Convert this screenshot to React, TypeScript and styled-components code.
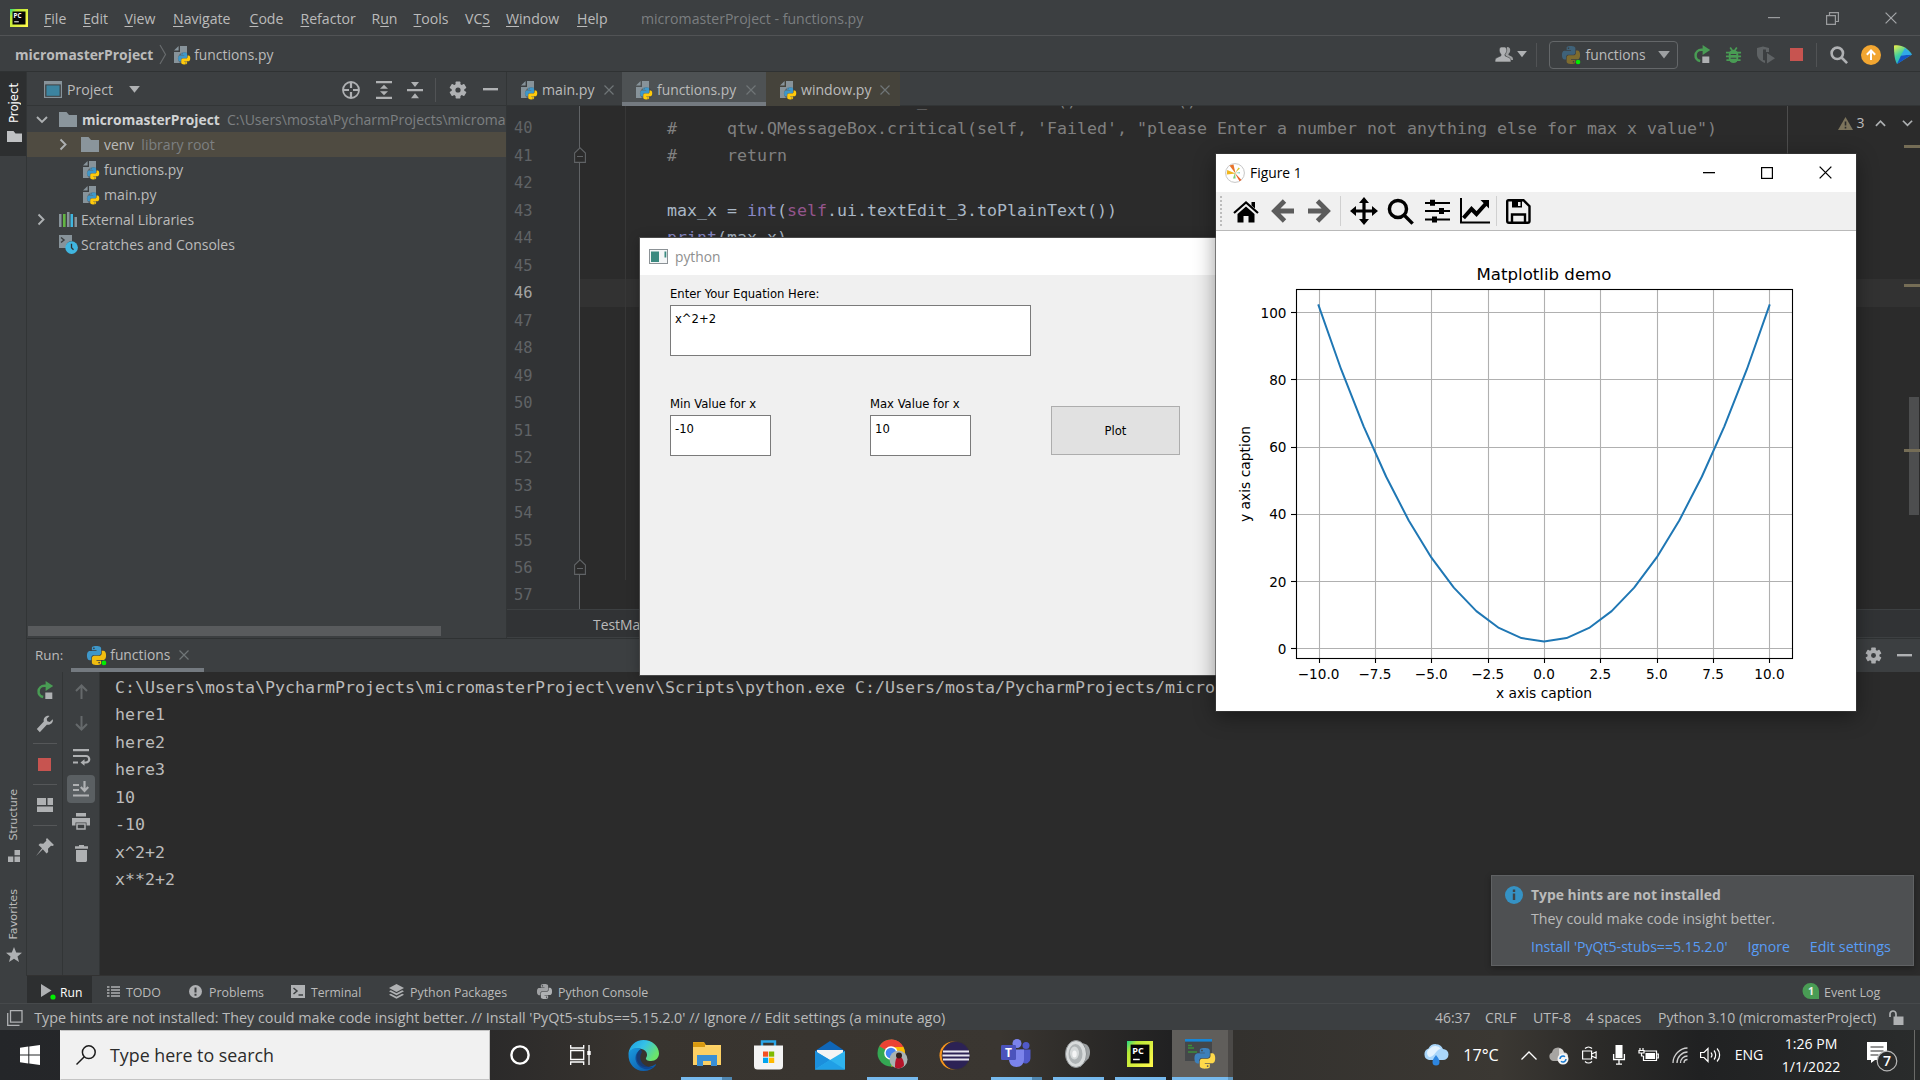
import React from 'react';
import styled, { createGlobalStyle, css } from 'styled-components';

const ui = `"Open Sans", "Noto Sans", sans-serif`;
const mono = `"DejaVu Sans Mono", "Liberation Mono", monospace`;

const Global = createGlobalStyle`
  * { box-sizing: border-box; }
  body { margin: 0; background: #2b2b2b; }
  svg { display: block; flex: none; overflow: visible; }
`;

const Screen = styled.div`
  position: relative;
  display: flex;
  flex-direction: column;
  width: 1920px;
  height: 1080px;
  overflow: hidden;
  background: #3c3f41;
  color: #bbbbbb;
  font: 14.1px/20px ${ui};
  white-space: pre;
`;

/* ---------- shared pieces ---------- */
const Label = styled.span<{ $size?: number; $ls?: number; $color?: string; $bold?: boolean }>`
  flex: none;
  ${p => p.$size && css`font-size: ${p.$size}px;`}
  ${p => p.$ls && css`letter-spacing: ${p.$ls}px;`}
  ${p => p.$color && css`color: ${p.$color};`}
  ${p => p.$bold && css`font-weight: 700;`}
`;
const Spacer = styled.div`flex: 1;`;
const VLine = styled.div<{ $h: number; $color?: string }>`
  flex: none;
  width: 1px;
  height: ${p => p.$h}px;
  background: ${p => p.$color || '#515355'};
`;

/* ---------- icons ---------- */
const PY_HALF = 'M14.25.18l.9.2.73.26.59.3.45.32.34.34.25.34.16.33.1.3.04.26.02.2-.01.13V8.5l-.05.63-.13.55-.21.46-.26.38-.3.31-.33.25-.35.19-.35.14-.33.1-.3.07-.26.04-.21.02H8.77l-.69.05-.59.14-.5.22-.41.27-.33.32-.27.35-.2.36-.15.37-.1.35-.07.32-.04.27-.02.21v3.06H3.17l-.21-.03-.28-.07-.32-.12-.35-.18-.36-.26-.36-.36-.35-.46-.32-.59-.28-.73-.21-.88-.14-1.05-.05-1.23.06-1.22.16-1.04.24-.87.32-.71.36-.57.4-.44.42-.33.42-.24.4-.16.36-.1.32-.05.24-.01h.16l.06.01h8.16v-.83H6.18l-.01-2.75-.02-.37.05-.34.11-.31.17-.28.25-.26.31-.23.38-.2.44-.18.51-.15.58-.12.64-.1.71-.06.77-.04.84-.02 1.27.05zm-6.3 1.98l-.23.33-.08.41.08.41.23.34.33.22.41.09.41-.09.33-.22.23-.34.08-.41-.08-.41-.23-.33-.33-.22-.41-.09-.41.09z';
const PyShape = ({ a = '#3e97c9', b = '#f0bd10' }) => (
  <g fillRule="evenodd">
    <path d={PY_HALF} fill={a} />
    <path d={PY_HALF} fill={b} transform="rotate(180 12 12)" />
  </g>
);
const PyIcon = ({ size = 19, a, b, dot }: { size?: number; a?: string; b?: string; dot?: boolean }) => (
  <svg width={size} height={size} viewBox="0 0 24 24">
    <PyShape a={a} b={b} />
    {dot && <circle cx="21.4" cy="21.4" r="3" fill="#00f000" />}
  </svg>
);
const PyFile = () => (
  <svg width="18" height="20" viewBox="0 0 18 20">
    <path d="M7 1h7v17H1V7h6z" fill="#87939a" />
    <path d="M5.6 1v4.6H1z" fill="#87939a" />
    <g transform="translate(5.2 7.4) scale(.5)">
      <circle cx="12" cy="12" r="12.5" fill="#3c3f41" opacity=".55" />
      <PyShape a="#3e97c9" b="#ffca0a" />
    </g>
  </svg>
);
const Folder = ({ w = 18 }: { w?: number }) => (
  <svg width={w} height={w * 0.84} viewBox="0 0 18 15">
    <path d="M0 0h7.5l2.500 3H18v12H0z" fill="#8a959c" />
  </svg>
);
const Chevron = ({ dir, color = '#adb0b2', size = 12 }: { dir: 'down' | 'right' | 'up'; color?: string; size?: number }) => (
  <svg width={size} height={size} viewBox="0 0 12 12" fill="none" stroke={color} strokeWidth="1.9">
    <path d={dir === 'down' ? 'M1 3l5 5 5-5' : dir === 'up' ? 'M1 8.5l5-5 5 5' : 'M2.500 .5l5 5-5 5'} />
  </svg>
);
const Triangle = ({ w = 11, color = '#afb1b3' }: { w?: number; color?: string }) => (
  <svg width={w} height={w * 0.62} viewBox="0 0 11 7"><path d="M0 0h11L5.5 7z" fill={color} /></svg>
);
const Cross = ({ size = 10, color = '#6f7577', sw = 1.2 }: { size?: number; color?: string; sw?: number }) => (
  <svg width={size} height={size} viewBox="0 0 10 10" stroke={color} strokeWidth={sw}><path d="M.5.5l9 9M9.5.5l-9 9" /></svg>
);
const Gear = ({ size = 18 }: { size?: number }) => (
  <svg width={size} height={size} viewBox="0 0 18 18">
    <g fill="#afb1b3">
      {[0, 60, 120].map(r => <rect key={r} x="6.6" y="0.6" width="4.8" height="16.8" rx="0.6" transform={`rotate(${r} 9 9)`} />)}
      <circle cx="9" cy="9" r="6.3" />
    </g>
    <circle cx="9" cy="9" r="2.6" fill="#3c3f41" />
  </svg>
);
const Rerun = () => (
  <svg width="18" height="19" viewBox="0 0 18 19">
    <path d="M10 4.800H8.200a5.700 5.700 0 0 0-1 11.300" fill="none" stroke="#499c54" strokeWidth="2.500" />
    <path d="M9.600 0l7.600 5-7.600 5z" fill="#499c54" />
    <rect x="9.300" y="11.500" width="7" height="6.500" fill="#afb1b3" />
  </svg>
);
const StopSquare = () => <svg width="13" height="13"><rect width="13" height="13" fill="#c75450" /></svg>;
const PyCharmLogo = ({ size }: { size: number }) => (
  <svg width={size} height={size} viewBox="0 0 18 18">
    <defs><linearGradient id="pcg" x1="0" y1="0" x2="1" y2="0.8"><stop offset="0" stopColor="#21d789" /><stop offset=".25" stopColor="#b8e835" /><stop offset="1" stopColor="#fcf84a" /></linearGradient></defs>
    <rect width="18" height="18" fill="url(#pcg)" />
    <rect x="2.500" y="2.500" width="13" height="13" fill="#060606" />
    <text x="3.600" y="9" fontFamily="Open Sans" fontWeight="700" fontSize="6.300" fill="#fff">PC</text>
    <rect x="4.200" y="12.300" width="4.600" height="1" fill="#fff" />
  </svg>
);
const Magnifier = ({ size, color, sw }: { size: number; color: string; sw: number }) => (
  <svg width={size} height={size} viewBox="0 0 18 18" fill="none" stroke={color} strokeWidth={sw}>
    <circle cx="7.300" cy="7.300" r="5.700" /><path d="M11.500 11.500l5.600 5.600" />
  </svg>
);

/* ---------- title and navigation bars ---------- */
const TitleBar = styled.div`
  flex: none;
  display: flex;
  align-items: center;
  height: 36px;
  padding: 1px 23px 0 10px;
  border-bottom: 1px solid #515355;
`;
const Menu = styled.div`display: flex; padding: 1px 0 0 16px;`;
const MenuItem = styled.div<{ $w: number }>`
  width: ${p => p.$w}px;
  u { text-underline-offset: 2px; text-decoration-thickness: 1px; }
`;
const WindowName = styled.div`padding-top: 1px; margin-left: -1px; color: #7b7e80;`;
const WinControls = styled.div`display: flex; align-items: center; gap: 46px;`;
const menu: [string, string, string, number][] = [
  ['', 'F', 'ile', 39], ['', 'E', 'dit', 41.5], ['', 'V', 'iew', 48.5], ['', 'N', 'avigate', 76.5], ['', 'C', 'ode', 51],
  ['', 'R', 'efactor', 71], ['R', 'u', 'n', 42], ['', 'T', 'ools', 51.5], ['VC', 'S', '', 41], ['', 'W', 'indow', 71], ['', 'H', 'elp', 65],
];

const NavBar = styled.div`
  flex: none;
  display: flex;
  align-items: center;
  height: 36px;
  padding: 2px 8px 0 15px;
  border-bottom: 1px solid #2f3233;
`;
const Crumb = styled.div`display: flex; align-items: center; gap: 3px; padding-left: 6px;`;
const RunConfig = styled.div`
  display: flex;
  align-items: center;
  width: 129px;
  height: 28px;
  margin: 0 15px 0 12px;
  padding: 0 12px 0 12px;
  gap: 6px;
  border: 1px solid #646769;
  border-radius: 4px;
`;
const Actions = styled.div<{ $gap: number; $ml?: number }>`
  display: flex;
  align-items: center;
  gap: ${p => p.$gap}px;
  margin-left: ${p => p.$ml || 0}px;
`;

const PersonIcon = () => (
  <svg width="18" height="17" viewBox="0 0 18 17" fill="#afb1b3">
    <path d="M12 1c2.500 0 3.300 1.500 3.200 3.200-.1 1.800-.8 2.800-1.700 3.600v1.200l3 1.500c.9.500 1.500 1.200 1.500 3.500h-3l-5-5z" opacity=".85" />
    <path d="M6.500 1h3c1.500 0 2.300 1.500 2.200 3.300-.1 2-1 3.300-1.700 4v1.500l4.300 2c1.200.6 1.700 1.500 1.700 4.200H0c0-2.700.5-3.600 1.700-4.200l4.300-2V8.300c-.7-.7-1.600-2-1.700-4C4.200 2.500 5 1 6.500 1z" stroke="#3c3f41" strokeWidth=".6" />
  </svg>
);
const BugIcon = () => (
  <svg width="17" height="18" viewBox="0 0 18 18">
    <g stroke="#499c54" strokeWidth="1.800" fill="none"><path d="M1 6.500h16M1 10.500h16M1.500 14.500h15M5.500 1l2 3M12.500 1l-2 3" /></g>
    <rect x="4" y="3.500" width="10" height="14" rx="5" fill="#499c54" />
    <path d="M6 8.500h6M6 12.500h6" stroke="#3c3f41" strokeWidth="1.200" />
  </svg>
);
const CoverageIcon = () => (
  <svg width="19" height="18" viewBox="0 0 19 18" fill="#5f6365">
    <path d="M0 2l6-1.500L12 2v4H9V3.500H6V14l2 .5v2.500C3 15 0 12 0 8z" /><path d="M10 7l8 5.300-8 5.200z" />
  </svg>
);
const UpdateIcon = () => (
  <svg width="20" height="20" viewBox="0 0 20 20"><circle cx="10" cy="10" r="10" fill="#f2a631" /><path d="M10 15V6M5.800 9.800L10 5.500l4.200 4.300" stroke="#fff" strokeWidth="2" fill="none" /></svg>
);
const SpaceIcon = () => (
  <svg width="18" height="19" viewBox="0 0 18 19">
    <defs><linearGradient id="spg" x1="0" y1="0" x2=".6" y2="1"><stop offset="0" stopColor="#f4f046" /><stop offset=".5" stopColor="#3fd0a0" /><stop offset="1" stopColor="#1aa0e0" /></linearGradient></defs>
    <path d="M0 .5C7-1 14 3 18 9.500L3 19C0 14 0 5 0 .5z" fill="url(#spg)" />
    <path d="M18 9.500L3 19 7 10.500z" fill="#1553c4" /><path d="M18 9.500L7 10.500 11 3z" fill="#32a8e8" />
  </svg>
);

/* ---------- main area ---------- */
const Main = styled.div`flex: none; display: flex; height: 904px;`;
const Stripe = styled.div`
  flex: none;
  display: flex;
  flex-direction: column;
  width: 27px;
  border-right: 1px solid #323536;
`;
const StripeButton = styled.div<{ $on?: boolean; $h: number; $gap: number }>`
  display: flex;
  flex-direction: column;
  align-items: center;
  justify-content: flex-end;
  gap: ${p => p.$gap}px;
  height: ${p => p.$h}px;
  padding-left: 2px;
  background: ${p => (p.$on ? '#2d2f30' : 'transparent')};
  color: ${p => (p.$on ? '#ffffff' : '#bbbbbb')};
`;
const Vertical = styled.span<{ $size: number }>`
  writing-mode: vertical-rl;
  transform: rotate(180deg);
  font: ${p => p.$size}px/18px "DejaVu Sans", "Open Sans", sans-serif;
`;
const Work = styled.div`flex: 1; min-width: 0; display: flex; flex-direction: column;`;
const Upper = styled.div`flex: none; display: flex; height: 566px;`;

const ProjectPanel = styled.div`
  flex: none;
  display: flex;
  flex-direction: column;
  width: 480px;
  border-right: 1px solid #323536;
`;
const PanelHeader = styled.div`
  flex: none;
  display: flex;
  align-items: center;
  height: 34px;
  padding: 2px 8px 0 17px;
  border-bottom: 1px solid #323536;
`;
const PanelTitle = styled.div`display: flex; align-items: center; gap: 16px; padding-left: 5px;`;
const Tree = styled.div`flex: 1; padding-top: 1px; overflow: hidden;`;
const TreeRow = styled.div<{ $pad: number; $hl?: boolean }>`
  display: flex;
  align-items: center;
  height: 25px;
  padding-left: ${p => p.$pad}px;
  overflow: hidden;
  background: ${p => (p.$hl ? '#4f4b41' : 'transparent')};
`;
const TreeArrow = styled.span`flex: none; width: 23px;`;
const TreeIcon = styled.span<{ $w?: number }>`flex: none; width: ${p => p.$w || 23}px;`;
const Thumb = styled.div`width: 413px; height: 10px; margin: 0 0 2px 1px; background: #595b5d;`;

const LocateIcon = () => (
  <svg width="18" height="18" viewBox="0 0 18 18" fill="none" stroke="#afb1b3" strokeWidth="1.800"><circle cx="9" cy="9" r="8" /><path d="M9 1v6M9 11v6M1 9h6M11 9h6" strokeWidth="2.200" /></svg>
);
const ExpandIcon = () => (
  <svg width="16" height="18" viewBox="0 0 16 18" fill="#afb1b3"><path d="M0 0h16v2.200H0zM0 15.800h16V18H0zM8 3.800l4 4H4zM8 14.200l4-4H4z" /></svg>
);
const CollapseIcon = () => (
  <svg width="16" height="18" viewBox="0 0 16 18" fill="#afb1b3"><path d="M0 8h16v2.200H0zM8 6L4 1h8zM8 12.200l-4 5h8z" /></svg>
);
const Dash = ({ w = 15, color = '#afb1b3', h = 2.4 }) => <svg width={w} height={h}><rect width={w} height={h} fill={color} /></svg>;
const ProjectIcon = () => (
  <svg width="18" height="17" viewBox="0 0 18 17"><rect width="18" height="17" fill="#87939a" /><rect x="1.200" y="3.400" width="15.600" height="12.400" fill="#3c3f41" /><rect x="2.400" y="4.400" width="13.200" height="10.400" fill="#3c84a0" /></svg>
);
const LibIcon = () => (
  <svg width="18" height="16" viewBox="0 0 18 16"><g fill="#87939a"><path d="M0 2h2.500v13H0zM8 0h2.500v15H8zM15.500 5H18v10h-2.500z" /></g><path d="M4 2h2.600v13H4z" fill="#62b543" /><path d="M11.500 2H14v13h-2.500z" fill="#40b6e0" /></svg>
);
const ScratchIcon = () => (
  <svg width="19" height="19" viewBox="0 0 19 19"><path d="M0 0h13v6a6 6 0 0 0-6 7H0z" fill="#87939a" /><path d="M2 2.500l3 2.500-3 2.500" stroke="#3c3f41" strokeWidth="1.500" fill="none" /><circle cx="12.600" cy="12.600" r="6.300" fill="#40b6e0" /><path d="M12.500 8.800v4l2 2" stroke="#2d3133" strokeWidth="1.300" fill="none" /></svg>
);

/* ---------- editor ---------- */
const Editor = styled.div`flex: 1; min-width: 0; display: flex; flex-direction: column;`;
const Tabs = styled.div`flex: none; display: flex; height: 34px; border-bottom: 1px solid #323536;`;
const Tab = styled.div<{ $w: number; $state?: 'active' | 'lib'; $end?: number }>`
  display: flex;
  align-items: center;
  justify-content: space-between;
  width: ${p => p.$w}px;
  height: 34px;
  padding: 2px ${p => p.$end || 10}px 0 13px;
  background: ${p => (p.$state === 'active' ? '#4e5254' : p.$state === 'lib' ? '#45433b' : 'transparent')};
  ${p => p.$state === 'active' && css`box-shadow: inset 0 -4px #747a80;`}
`;
const TabName = styled.div`display: flex; align-items: center; gap: 4px;`;
const CodeArea = styled.div`
  position: relative;
  flex: 1;
  display: flex;
  min-height: 0;
  overflow: hidden;
  background: #2b2b2b;
  font: 16.62px/27.47px ${mono};
`;
const Gutter = styled.div`
  position: relative;
  flex: none;
  width: 73px;
  height: 503px;
  background: #313335;
  border-right: 1px solid #606366;
  color: #606366;
`;
const Lines = styled.div<{ $shift?: number }>`margin-top: ${p => -18.9 + (p.$shift || 0)}px;`;
const GutterLine = styled.div<{ $on?: boolean }>`
  height: 27.47px;
  padding-left: 7px;
  font-size: 15.400px;
  color: ${p => (p.$on ? '#a4a3a3' : '#606366')};
`;
const CodeLine = styled.div<{ $on?: boolean; $c?: string }>`
  height: 27.47px;
  padding-left: 87px;
  background: ${p => (p.$on ? '#323232' : 'transparent')};
  color: ${p => p.$c || '#a9b7c6'};
`;
const CodeBody = styled.div`flex: 1; min-width: 0;`;
const IndentGuide = styled.div`position: absolute; left: 118px; top: 0; width: 1px; height: 474px; background: #373737;`;
const MarginGuide = styled.div`position: absolute; left: 1280px; top: 0; width: 1px; height: 503px; background: #4d4d4d;`;
const FoldMark = styled.div<{ $y: number }>`position: absolute; left: 67px; top: ${p => p.$y}px;`;
const Inspection = styled.div`
  position: absolute; right: 7px; top: 7px;
  display: flex; align-items: center;
  font: 15px/20px ${ui};
`;
const StripeMark = styled.div<{ $y: number }>`position: absolute; right: 0; top: ${p => p.$y}px; width: 16px; height: 2.5px; background: #756d56;`;
const EditorThumb = styled.div`position: absolute; right: 1px; top: 291px; width: 10px; height: 118px; background: #4d4e4f;`;
const Crumbs = styled.div`
  flex: none;
  height: 29px;
  padding: 5px 0 0 86px;
  background: #313335;
  border-top: 1px solid #3d4042;
  border-bottom: 1px solid #3d4042;
`;
const Purple = styled.span`color: #94558d;`;
const Builtin = styled.span`color: #8888c6;`;
const FoldIcon = () => (
  <svg width="12" height="16" viewBox="0 0 12 16"><path d="M.6 15.400V6L6 .8 11.400 6v9.400z" fill="#2b2b2b" stroke="#606366" strokeWidth="1.100" /><path d="M3 9.500h6" stroke="#606366" /></svg>
);

/* ---------- run panel ---------- */
const RunPanel = styled.div`flex: 1; display: flex; flex-direction: column; border-top: 1px solid #2f3233;`;
const RunHeader = styled.div`
  flex: none;
  display: flex;
  align-items: center;
  height: 33px;
  padding: 0 8px;
`;
const RunTitle = styled.div`margin-top: -2px; font-size: 13.400px;`;
const RunTab = styled.div`
  display: flex;
  align-items: center;
  width: 133px;
  height: 33px;
  margin-left: 8px;
  padding: 0 0 1px 16px;
  gap: 4px;
  box-shadow: inset 0 -4px #747a80;
`;
const RunTabClose = styled.span`margin-left: 5px;`;
const RunBody = styled.div`flex: 1; display: flex; min-height: 0; border-bottom: 1px solid #323232;`;
const SideTools = styled.div<{ $w: number; $top: number }>`
  flex: none;
  display: flex;
  flex-direction: column;
  align-items: center;
  width: ${p => p.$w}px;
  padding-top: ${p => p.$top}px;
  border-right: 1px solid #323536;
`;
const Tool = styled.div<{ $h: number; $on?: boolean }>`
  display: flex;
  align-items: center;
  justify-content: center;
  width: 28px;
  height: ${p => p.$h}px;
  border-radius: 4px;
  background: ${p => (p.$on ? '#5a5f62' : 'transparent')};
`;
const HLine = styled.div`width: 24px; height: 1px; background: #555759;`;
const Console = styled.div`
  flex: 1;
  padding: 1.500px 0 0 15px;
  background: #2b2b2b;
  overflow: hidden;
  font: 16.610px/27.550px ${mono};
`;

const G = '#afb1b3';
const Wrench = () => <svg width="18" height="18" viewBox="0 0 18 18"><path d="M16.800 4.300l-3 2.700-2.500-.7-.6-2.500L13.500 1C10 .2 7 3 7.800 6.500L.8 14l3 3.200 7-7.500c3.500.8 6.800-2 6-5.400z" fill={G} /></svg>;
const LayoutIcon = () => <svg width="16" height="14" viewBox="0 0 16 14" fill={G}><path d="M0 0h9v7H0zM10.500 0H16v7h-5.500zM0 8.500h16V14H0z" /></svg>;
const PinIcon = () => <svg width="18" height="18" viewBox="0 0 18 18" fill={G}><path d="M11 0l7 7-1.500 1-1.500-.3-3 3 .2 3.300-1.700 1.500-3.700-4.200L0 18l6-7.800L2.500 7 4 5.500l3.300.2 3-3L10 1.200z" /></svg>;
const ArrowV = ({ up }: { up?: boolean }) => <svg width="13" height="15" viewBox="0 0 13 15" stroke="#65696b" strokeWidth="2" fill="none"><path d={up ? 'M6.500 15V1.500M1 7l5.500-5.500L12 7' : 'M6.500 0v13.500M1 8l5.500 5.500L12 8'} /></svg>;
const WrapIcon = () => <svg width="17" height="17" viewBox="0 0 17 17" fill="none" stroke={G} strokeWidth="2.200"><path d="M0 1.200h16M0 7h13a3 3 0 0 1 0 6.500h-3M0 13.500h5" /><path d="M11.500 10.200L7.500 13.500l4 3.300z" fill={G} stroke="none" /></svg>;
const ScrollEndIcon = () => <svg width="16" height="16" viewBox="0 0 16 16" stroke={G} strokeWidth="2.200" fill="none"><path d="M0 14.500h16M0 4h6M0 9h6M11.500 0v9M7.800 6l3.700 4 3.700-4" /></svg>;
const PrintIcon = () => <svg width="18" height="17" viewBox="0 0 18 17" fill={G}><path d="M4 0h10v3.500H4zM0 5h18v7.500h-3.500V9.500h-11v3H0z" /><path d="M5 11h8v5H5z" fill="none" stroke={G} strokeWidth="1.500" /></svg>;
const TrashIcon = () => <svg width="13" height="17" viewBox="0 0 13 17" fill={G}><path d="M4 0h5v1.200h4v2.500H0V1.200h4zM1 5h11v10.500c0 .8-.7 1.500-1.500 1.500h-8C1.700 17 1 16.300 1 15.500z" /></svg>;

/* ---------- bottom bars ---------- */
const ToolWindows = styled.div`
  flex: none;
  display: flex;
  align-items: stretch;
  height: 28px;
  padding-left: 27px;
  border-bottom: 1px solid #46494b;
  font-size: 12.400px;
`;
const ToolWindow = styled.div<{ $w: number; $on?: boolean; $pad?: number; $gap?: number }>`
  display: flex;
  align-items: center;
  width: ${p => p.$w}px;
  padding: 7px 0 0 ${p => p.$pad || 0}px;
  gap: ${p => p.$gap || 7}px;
  line-height: 16px;
  background: ${p => (p.$on ? '#2d2f30' : 'transparent')};
  color: ${p => (p.$on ? '#ffffff' : '#bbbbbb')};
  svg { margin-top: -4px; }
`;
const StatusBar = styled.div`
  flex: none;
  display: flex;
  align-items: center;
  height: 26px;
  padding: 1px 16px 0 7px;
`;
const StatusCells = styled.div`display: flex; align-items: center;`;
const StatusCell = styled.div<{ $w: number }>`width: ${p => p.$w}px;`;

/* ---------- taskbar ---------- */
const Taskbar = styled.div`
  flex: none;
  display: flex;
  height: 50px;
  color: #fff;
  background: linear-gradient(90deg, #242629 0, #2b2a2a 490px, #38342f 640px, #3a3631 1000px, #2c2a28 1090px, #212122 1170px, #33312e 1234px, #3b3833 1500px, #2b2a28 1600px, #202122 1700px, #2a2c2c 1920px);
`;
const StartButton = styled.div`display: flex; align-items: center; justify-content: center; width: 60px;`;
const SearchBox = styled.div`
  display: flex;
  align-items: center;
  width: 430px;
  padding-left: 15px;
  gap: 14px;
  background: #f1f1f1;
  border: 1px solid #c4c4c4;
  border-left-color: #f1f1f1;
  color: #2b2b2b;
  font-size: 17.820px;
`;
const AppButton = styled.div<{ $w?: number; $active?: boolean }>`
  display: flex;
  flex-direction: column;
  align-items: center;
  justify-content: space-between;
  width: ${p => p.$w || 62}px;
  height: 50px;
  ${p => p.$active && css`
    padding-right: 5px;
    margin-left: 1px;
    background: linear-gradient(90deg, #605e5b 56px, #4b4947 56px);
  `}
`;
const AppIcon = styled.div`flex: 1; display: flex; align-items: center;`;
const Underline = styled.div<{ $split?: boolean; $full?: boolean }>`
  width: ${p => (p.$full ? 61 : 51)}px;
  height: 3px;
  ${p => p.$full && css`margin-right: -5px;`}
  background: ${p => (p.$full ? 'linear-gradient(90deg, #76b9ed 56px, #5f97c0 56px)' : p.$split ? 'linear-gradient(90deg, #76b9ed 41px, #4f86b0 41px)' : '#76b9ed')};
`;
const Tray = styled.div`display: flex; align-items: center; padding-right: 5px;`;
const TrayItem = styled.div<{ $w: number }>`
  display: flex;
  align-items: center;
  justify-content: center;
  width: ${p => p.$w}px;
`;
const Clock = styled.div`width: 76px; margin-right: 10px; text-align: center; font-size: 14.100px; line-height: 23px;`;
const DesktopEdge = styled.div`width: 1px; height: 50px; margin-left: 9px; background: #6a6a68;`;

const EdgeIcon = () => (
  <svg width="31" height="31" viewBox="0 0 31 31">
    <defs>
      <linearGradient id="eg1" x1="0" y1="0" x2="1" y2=".5"><stop offset="0" stopColor="#1b9de2" /><stop offset=".5" stopColor="#35c1e8" /><stop offset="1" stopColor="#6be36a" /></linearGradient>
      <linearGradient id="eg2" x1="0" y1="0" x2="1" y2="1"><stop offset="0" stopColor="#1a9be0" /><stop offset="1" stopColor="#0b4fa0" /></linearGradient>
    </defs>
    <path d="M.5 14C1 6 7.500 0 15.500 0 24 0 31 6 31 13.500c0 4.500-3.500 7.500-8 7.500-4 0-5.500-1.500-5-3 1-2 1.500-3 .5-5.500C16 7 3 7 .5 14z" fill="url(#eg1)" />
    <path d="M.5 14C2 8 9 7 13 9c-5 3-6 10-2 15 3 4 10 4.500 16 .5.700-.4 1.200 0 .8.700C25 29 20.500 31 15.500 31 7 31 0 24 .5 14z" fill="url(#eg2)" />
    <path d="M13 9c-7 4-7 12-2 17 4 4 10 4 14 1-9 1-16-7-11-15z" fill="#0d3f8c" opacity=".75" />
  </svg>
);
const ExplorerIcon = () => (
  <svg width="28" height="26" viewBox="0 0 28 26"><path d="M0 1h11l2 3H0z" fill="#e0a21b" /><path d="M0 4h28v20H0z" fill="#ffd367" /><path d="M0 2h12v4H0z" fill="#d99a10" /><path d="M0 6h28v18H0z" fill="#fcd064" /><path d="M4 14h20v11h-6v-5h-8v5H4z" fill="#3a8fd4" /></svg>
);
const StoreIcon = () => (
  <svg width="29" height="30" viewBox="0 0 29 30"><path d="M8 6V1.500h13V6" fill="none" stroke="#2ba6e8" strokeWidth="2.400" /><path d="M0 5.500h29V26a3.500 3.500 0 0 1-3.500 3.500h-22A3.500 3.500 0 0 1 0 26z" fill="#f3f3f3" /><path d="M9 11.500h5.200v5.200H9z" fill="#f25022" /><path d="M15 11.500h5.200v5.200H15z" fill="#7fba00" /><path d="M9 17.700h5.200V23H9z" fill="#00a4ef" /><path d="M15 17.700h5.200V23H15z" fill="#ffb900" /></svg>
);
const MailIcon = () => (
  <svg width="30" height="29" viewBox="0 0 30 29"><path d="M0 10L15 0l15 10v4H0z" fill="#0f66b8" /><path d="M2 9h26v10H2z" fill="#f4f4f4" /><path d="M0 10l15 9 15-9v18.500H0z" fill="#2fb4ef" /><path d="M0 10l15 9L0 28.500z" fill="#1b8fdc" /><path d="M15 19l15 9.500H0z" fill="#209fe6" /></svg>
);
const ChromeIcon = () => (
  <svg width="31" height="31" viewBox="0 0 31 31">
    <circle cx="14" cy="15" r="13.500" fill="#34a853" /><path d="M14 15L2.300 8.200A13.500 13.500 0 0 1 25.700 8.200z" fill="#ea4335" /><path d="M14 8.500h12.300A13.500 13.500 0 0 1 14 28.500l6-10z" fill="#fbbc04" /><path d="M14 1.500A13.500 13.500 0 0 1 26.300 9H14z" fill="#ea4335" />
    <circle cx="14" cy="15" r="6.800" fill="#fff" /><circle cx="14" cy="15" r="5.300" fill="#4285f4" />
    <circle cx="21.500" cy="21.500" r="9" fill="#a9b3b3" /><path d="M18 29.500c0-7 1-11 4-11s5 4 5 9c-2.500 3-6 3.700-9 2z" fill="#b5152a" /><circle cx="22" cy="17.500" r="3" fill="#30201c" />
  </svg>
);
const EclipseIcon = () => (
  <svg width="31" height="29" viewBox="0 0 31 29"><circle cx="14.500" cy="14.500" r="14" fill="#f7941e" /><circle cx="17" cy="14.500" r="14" fill="#2c2255" stroke="#383430" strokeWidth=".8" /><path d="M4 10.500h26M3.500 14.500h27M4 18.500h26" stroke="#e9e7f2" strokeWidth="2.100" /></svg>
);
const TeamsIcon = () => (
  <svg width="30" height="31" viewBox="0 -1 30 31"><circle cx="25" cy="6.500" r="3.500" fill="#5059c9" /><path d="M19 10.500h10.500v9a5 5 0 0 1-8 4z" fill="#5059c9" /><circle cx="16" cy="4.500" r="4.500" fill="#7b83eb" /><path d="M8 10.500h15V20c0 5-3 8-7.500 8S8 25 8 20z" fill="#7b83eb" /><rect y="6" width="15" height="15" rx="1.200" fill="#4b53bc" /><text x="4" y="17.800" fontFamily="Open Sans" fontWeight="700" fontSize="12" fill="#fff">T</text></svg>
);
const SpeakerIcon = () => (
  <svg width="27" height="28" viewBox="0 0 27 28"><path d="M12 1l9.500 3.500c4 3 4.500 9 2 14L15 27z" fill="#9da1a3" /><ellipse cx="11" cy="14" rx="10.500" ry="13.500" fill="#d8dbdc" stroke="#8b8f91" /><ellipse cx="10.500" cy="14" rx="7" ry="10" fill="#aeb3b5" /><ellipse cx="9.500" cy="13" rx="4.500" ry="6.500" fill="#d5d9da" /><ellipse cx="9.500" cy="14" rx="2.200" ry="3.500" fill="#f4f5f6" /></svg>
);
const PyAppIcon = () => (
  <svg width="30" height="29" viewBox="0 0 30 29"><rect width="27" height="22" fill="#44474a" /><rect width="27" height="2.600" fill="#1886d6" /><path d="M3 9h6M3 13h9M3 6.500h4" stroke="#3b8f3b" strokeWidth="1.300" /><g transform="translate(9.500 9) scale(.86)"><PyShape a="#3d80bb" b="#ffd94a" /></g></svg>
);
const WeatherIcon = () => (
  <svg width="26" height="22" viewBox="0 0 26 22"><path d="M6 16a6 6 0 0 1-.5-11.500A8 8 0 0 1 20 5a5.500 5.500 0 0 1 0 11z" fill="#a9d6fa" /><path d="M6 13A5 5 0 0 1 7 4.500 7 7 0 0 1 18 5c-5 0-6 8-12 8z" fill="#e3f3ff" /><path d="M13 11c2.500 3.500 3.500 5 3.500 7a3.500 3.500 0 0 1-7 0c0-2 1-3.500 3.500-7z" fill="#2e86e0" /></svg>
);

/* ---------- floating windows ---------- */
const AppWindow = styled.div`
  position: absolute;
  left: 640px;
  top: 238px;
  width: 600px;
  height: 437px;
  background: #f0f0f0;
  box-shadow: 0 0 0 1px #4a4a4a, 0 2px 12px rgba(0,0,0,.3);
  color: #000;
  font: 12.900px/18px "DejaVu Sans Condensed", "DejaVu Sans", sans-serif;
`;
const AppTitle = styled.div`
  display: flex;
  align-items: center;
  height: 37px;
  padding-left: 9px;
  gap: 7px;
  background: #fff;
  color: #8f8f8f;
  font: 13.800px/20px ${ui};
`;
const Form = styled.div`padding: 10px 0 0 30px;`;
const FormRow = styled.div`display: flex; margin-top: 39px;`;
const Field = styled.div<{ $w: number; $gap?: number }>`width: ${p => p.$w}px; margin-right: ${p => p.$gap || 0}px;`;
const TextBox = styled.div<{ $h: number }>`
  height: ${p => p.$h}px;
  margin-top: 2px;
  padding: 4px 4px;
  background: #fff;
  border: 1px solid #7a7a7a;
`;
const PlotButton = styled.div`
  display: flex;
  align-items: center;
  justify-content: center;
  width: 129px;
  height: 49px;
  margin-top: 11px;
  padding-top: 1px;
  background: #e1e1e1;
  border: 1px solid #adadad;
`;
const AppWinIcon = () => (
  <svg width="19" height="15" viewBox="0 0 19 15"><rect x=".5" y=".5" width="18" height="14" fill="#f4f6f7" stroke="#8c9296" /><rect x="2" y="2.500" width="8" height="10.500" fill="#3b8a80" /><rect x="15.500" y="2.500" width="1.800" height="6" fill="#3b8a80" /></svg>
);

const Figure = styled.div`
  position: absolute;
  left: 1216px;
  top: 154px;
  width: 640px;
  height: 557px;
  display: flex;
  flex-direction: column;
  background: #fff;
  box-shadow: 0 0 0 1px rgba(60,60,60,.6), 0 5px 20px rgba(0,0,0,.42);
  color: #000;
`;
const FigureTitle = styled.div`
  flex: none;
  display: flex;
  align-items: center;
  height: 38px;
  padding: 0 24px 1px 9px;
  font-size: 13.850px;
`;
const FigureName = styled.span`margin-left: 5px;`;
const FigureControls = styled.div`display: flex; align-items: center; gap: 46px;`;
const FigureToolbar = styled.div`
  flex: none;
  display: flex;
  align-items: center;
  height: 39px;
  padding-left: 4px;
  background: #f0f0f0;
  border-bottom: 1px solid #b9b9b9;
`;
const Grip = styled.div`width: 2px; height: 30px; border-left: 2px dotted #bcbcbc;`;
const FigTool = styled.div<{ $w: number }>`display: flex; align-items: center; justify-content: center; width: ${p => p.$w}px; height: 32px;`;

const MplLogo = () => (
  <svg width="20" height="20" viewBox="0 0 20 20"><circle cx="10" cy="10" r="9.400" fill="#fff" stroke="#c6c6c6" /><path d="M10.500 10.500L4.500 2.500 8.500 1.500z" fill="#e8732a" /><path d="M10.500 10.500L1.800 11.500 2.200 7z" fill="#f0b51c" /><path d="M9.500 9.500l7 7.500-2 1.200z" fill="#e8632a" /><path d="M10 10l3.500-5.500 1.400 1z" fill="#d6c52c" /><path d="M10 9.500l-2 6 2.600 0z" fill="#7fd17a" /><path d="M10 10l5-1v1.500z" fill="#8ed3c0" /></svg>
);
const HomeIcon = () => (
  <svg width="26" height="23" viewBox="0 0 26 23"><path d="M13 6.500l8.500 7.500V22.500H15.500V16h-5v6.500h-6V14z" /><path d="M1 13L13 2.500 25 13" fill="none" stroke="#000" strokeWidth="2.200" /><path d="M18.500 2H22v6.500l-3.500-3z" /></svg>
);
const BackIcon = ({ flip }: { flip?: boolean }) => (
  <svg width="24" height="24" viewBox="0 0 24 24" fill="none" stroke="#5c5c5c" strokeWidth="4.800"><path d={flip ? 'M1 12h20M10.500 2L20.500 12l-10 10' : 'M23 12H3M13.500 2l-10 10 10 10'} /></svg>
);
const MoveIcon = () => (
  <svg width="28" height="28" viewBox="0 0 28 28"><path d="M14 3v22M3 14h22" stroke="#000" strokeWidth="3.200" /><path d="M14 0l5 6H9zM14 28l5-6H9zM0 14l6-5v10zM28 14l-6-5v10z" /></svg>
);
const SlidersIcon = () => (
  <svg width="25" height="24" viewBox="0 0 25 24"><path d="M0 4h25M0 12h25M0 20.500h25" stroke="#000" strokeWidth="2.200" /><path d="M5 .8h5v6H5zM14 9h5v6h-5zM7 17.500h5v6H7z" /></svg>
);
const ChartIcon = () => (
  <svg width="30" height="26" viewBox="0 0 30 26" fill="none" stroke="#000"><path d="M1 0v24.500h29" strokeWidth="2" /><path d="M3.500 20l8-9 5 5L26 5.500" strokeWidth="4" /><path d="M20.500 2h8.500v8.500z" fill="#000" stroke="none" /></svg>
);
const SaveIcon = () => (
  <svg width="25" height="25" viewBox="0 0 25 25" fill="none" stroke="#000" strokeWidth="2.400"><path d="M2.500 1.200h15l6 6V22c0 1.200-.6 1.800-1.800 1.800H3c-1.200 0-1.800-.6-1.800-1.800V2.500c0-.8.500-1.300 1.300-1.300z" /><path d="M6 23.500v-8h13v8" /><path d="M6 1.500h10v7H6z" fill="#000" stroke="none" /><path d="M12 3h2.500v4H12z" fill="#f0f0f0" stroke="none" /></svg>
);

const xPos = (v: number) => 80 + ((v + 11) / 22) * 496;
const yPos = (v: number) => 427.2 - ((v + 3) / 110) * 369.6;
const Plot = () => {
  const pts = Array.from({ length: 21 }, (_, i) => i - 10).map(x => `${xPos(x)},${yPos(x * x + 2)}`).join(' ');
  const xs = [-10, -7.5, -5, -2.5, 0, 2.5, 5, 7.5, 10];
  const ys = [0, 20, 40, 60, 80, 100];
  const snap = (v: number) => Math.round(v) + 0.5;
  return (
    <svg width="640" height="480" viewBox="0 0 640 480" fontFamily="DejaVu Sans" fontSize="13.6">
      {xs.map(x => <g key={x}>
        <path d={`M${snap(xPos(x))} 58V427`} stroke="#b0b0b0" strokeWidth="1.100" />
        <path d={`M${snap(xPos(x))} 427v5`} stroke="#000" strokeWidth="1.100" />
        <text x={xPos(x)} y="447.500" textAnchor="middle">{x.toFixed(1).replace('-', '\u2212')}</text>
      </g>)}
      {ys.map(y => <g key={y}>
        <path d={`M80 ${snap(yPos(y))}H576`} stroke="#b0b0b0" strokeWidth="1.100" />
        <path d={`M80 ${snap(yPos(y))}h-5`} stroke="#000" strokeWidth="1.100" />
        <text x="70.500" y={yPos(y) + 5.6} textAnchor="end">{y}</text>
      </g>)}
      <polyline points={pts} fill="none" stroke="#1f77b4" strokeWidth="2" strokeLinejoin="round" strokeLinecap="square" />
      <rect x="80.500" y="58.500" width="496" height="369" fill="none" stroke="#000" strokeWidth="1.100" />
      <text x="328" y="48.500" textAnchor="middle" fontSize="16.600">Matplotlib demo</text>
      <text x="328" y="466.500" textAnchor="middle" fontSize="13.850">x axis caption</text>
      <text transform="translate(34 243) rotate(-90)" textAnchor="middle" fontSize="13.850">y axis caption</text>
    </svg>
  );
};

const Notice = styled.div`
  position: absolute;
  left: 1491px;
  top: 875px;
  width: 423px;
  height: 91px;
  display: grid;
  grid-template-columns: 39px 1fr;
  grid-template-rows: 37px 12px 1fr;
  align-items: center;
  background: #4e5052;
  border: 1px solid #5f6163;
  box-shadow: 0 2px 6px rgba(0,0,0,.3);
`;
const NoticeIcon = styled.div`padding-left: 13px;`;
const NoticeText = styled.div`grid-column: 2;`;
const Links = styled.div`grid-column: 2; display: flex; gap: 20px; padding-top: 4px; color: #589df6;`;

const lineNumbers = Array.from({ length: 19 }, (_, i) => i + 39);
const output = [
  'C:\\Users\\mosta\\PycharmProjects\\micromasterProject\\venv\\Scripts\\python.exe C:/Users/mosta/PycharmProjects/micro',
  'here1', 'here2', 'here3', '10', '-10', 'x^2+2', 'x**2+2',
];

export default function App() {
  return (
    <Screen>
      <Global />
      <TitleBar>
        <PyCharmLogo size={18} />
        <Menu>
          {menu.map(([a, u, b, w]) => <MenuItem key={a + u + b} $w={w}>{a}<u>{u}</u>{b}</MenuItem>)}
        </Menu>
        <WindowName>micromasterProject - functions.py</WindowName>
        <Spacer />
        <WinControls>
          <Dash w={12} h={1.2} color="#9a9c9e" />
          <svg width="13" height="13" viewBox="0 0 13 13" fill="none" stroke="#9a9c9e" strokeWidth="1.200"><path d="M.6 3.600h8.800v8.800H.6zM3.500 3.500V.6h8.900v8.900H9.500" /></svg>
          <Cross size={12} color="#a5a7a9" sw={1} />
        </WinControls>
      </TitleBar>

      <NavBar>
        <Label $bold $size={13.85}>micromasterProject</Label>
        <Crumb>
          <svg width="8" height="19" viewBox="0 0 8 19" fill="none" stroke="#686b6d" strokeWidth="1.200"><path d="M1 0l5.500 9.500L1 19" /></svg>
          <span />
          <PyFile />
          <Label $size={13.85}>functions.py</Label>
        </Crumb>
        <Spacer />
        <Actions $gap={4}><PersonIcon /><Triangle w={10} /></Actions>
        <Actions $gap={0} $ml={9}><VLine $h={24} /></Actions>
        <RunConfig>
          <PyIcon size={18} a="#3f6279" b="#7d6b2f" dot />
          <Label $size={13.85}>functions</Label>
          <Spacer />
          <Triangle w={12} color="#9da0a2" />
        </RunConfig>
        <Actions $gap={14.5}><Rerun /><BugIcon /><CoverageIcon /><StopSquare /></Actions>
        <Actions $gap={13} $ml={13}><VLine $h={24} /><Magnifier size={18} color="#afb1b3" sw={2.6} /><UpdateIcon /><SpaceIcon /></Actions>
      </NavBar>

      <Main>
        <Stripe>
          <StripeButton $on $h={84} $gap={8}>
            <Vertical $size={11.7}>Project</Vertical>
            <svg width="15" height="25" viewBox="0 0 15 25"><path d="M0 0h6.500l2 2.500H15V11H0z" fill="#bfc1c3" /></svg>
          </StripeButton>
          <StripeButton $h={706} $gap={9}>
            <Vertical $size={11.1}>Structure</Vertical>
            <svg width="12" height="12" viewBox="0 0 12 12" fill="#afb1b3"><path d="M6.500 0H12v5.300H6.500zM6.500 6.500H12V12H6.500zM0 6.500h5.300V12H0z" /></svg>
          </StripeButton>
          <StripeButton $h={100} $gap={7}>
            <Vertical $size={11.2}>Favorites</Vertical>
            <svg width="16" height="15" viewBox="0 0 16 15"><path d="M8 0l2.200 5.500 5.800.3-4.500 3.700L13 15l-5-3.200L3 15l1.500-5.500L0 5.800l5.800-.3z" fill="#afb1b3" /></svg>
          </StripeButton>
        </Stripe>

        <Work>
          <Upper>
            <ProjectPanel>
              <PanelHeader>
                <ProjectIcon />
                <PanelTitle><Label>Project</Label><Triangle /></PanelTitle>
                <Spacer />
                <Actions $gap={15.5}><LocateIcon /><ExpandIcon /><CollapseIcon /></Actions>
                <Actions $gap={13} $ml={12}><VLine $h={24} /><Gear /></Actions>
                <Actions $gap={0} $ml={16}><Dash /></Actions>
              </PanelHeader>
              <Tree>
                <TreeRow $pad={9}>
                  <TreeArrow><Chevron dir="down" /></TreeArrow><TreeIcon><Folder /></TreeIcon>
                  <Label $bold $size={13.8} $color="#d0d2d3">micromasterProject</Label>
                  <Label $size={14} $color="#7d8082">{'  C:\\Users\\mosta\\PycharmProjects\\microma'}</Label>
                </TreeRow>
                <TreeRow $pad={31} $hl>
                  <TreeArrow><Chevron dir="right" /></TreeArrow><TreeIcon><Folder /></TreeIcon>
                  <Label $size={13.8}>venv</Label><Label $color="#7d8082">{'  library root'}</Label>
                </TreeRow>
                <TreeRow $pad={55}><TreeIcon $w={22}><PyFile /></TreeIcon><Label $size={13.85}>functions.py</Label></TreeRow>
                <TreeRow $pad={55}><TreeIcon $w={22}><PyFile /></TreeIcon><Label>main.py</Label></TreeRow>
                <TreeRow $pad={9}>
                  <TreeArrow><Chevron dir="right" /></TreeArrow><TreeIcon $w={22}><LibIcon /></TreeIcon>
                  <Label $size={13.9}>External Libraries</Label>
                </TreeRow>
                <TreeRow $pad={9}>
                  <TreeArrow /><TreeIcon $w={22}><ScratchIcon /></TreeIcon>
                  <Label $size={14}>Scratches and Consoles</Label>
                </TreeRow>
              </Tree>
              <Thumb />
            </ProjectPanel>

            <Editor>
              <Tabs>
                <Tab $w={115} $end={8}><TabName><PyFile /><Label>main.py</Label></TabName><Cross /></Tab>
                <Tab $w={144} $state="active"><TabName><PyFile /><Label $size={13.85}>functions.py</Label></TabName><Cross /></Tab>
                <Tab $w={134} $state="lib"><TabName><PyFile /><Label>window.py</Label></TabName><Cross /></Tab>
              </Tabs>
              <CodeArea>
                <Gutter>
                  <Lines $shift={0.9}>{lineNumbers.map(n => <GutterLine key={n} $on={n === 46}>{n}</GutterLine>)}</Lines>
                  <FoldMark $y={41}><FoldIcon /></FoldMark>
                  <FoldMark $y={453}><FoldIcon /></FoldMark>
                </Gutter>
                <CodeBody>
                  <Lines>
                    <CodeLine $c="#808080"># if not self.ui.textEdit_3.toPlainText().isnumeric():</CodeLine>
                    <CodeLine $c="#808080">#     qtw.QMessageBox.critical(self, 'Failed', "please Enter a number not anything else for max x value")</CodeLine>
                    <CodeLine $c="#808080">#     return</CodeLine>
                    <CodeLine />
                    <CodeLine>max_x = <Builtin>int</Builtin>(<Purple>self</Purple>.ui.textEdit_3.toPlainText())</CodeLine>
                    <CodeLine><Builtin>print</Builtin>(max_x)</CodeLine>
                    <CodeLine />
                    <CodeLine $on />
                  </Lines>
                </CodeBody>
                <IndentGuide />
                <MarginGuide />
                <Inspection>
                  <svg width="15" height="13" viewBox="0 0 15 13"><path d="M7.500 0L15 13H0z" fill="#7c745c" /><path d="M7.500 4.500v4M7.500 9.800v1.600" stroke="#2b2b2b" strokeWidth="1.600" /></svg>
                  <Label $size={14}>{' 3   '}</Label>
                  <Chevron dir="up" size={11} />
                  <Label>{'    '}</Label>
                  <Chevron dir="down" size={11} />
                </Inspection>
                <StripeMark $y={39} /><StripeMark $y={178} /><EditorThumb /><StripeMark $y={343} />
              </CodeArea>
              <Crumbs><Label $size={13.9}>TestMa</Label></Crumbs>
            </Editor>
          </Upper>

          <RunPanel>
            <RunHeader>
              <RunTitle>Run:</RunTitle>
              <RunTab>
                <PyIcon size={19} dot />
                <Label $size={13.85}>functions</Label>
                <RunTabClose><Cross /></RunTabClose>
              </RunTab>
              <Spacer />
              <Actions $gap={15}><Gear size={17} /><Dash /></Actions>
            </RunHeader>
            <RunBody>
              <SideTools $w={36} $top={3}>
                <Tool $h={31}><Rerun /></Tool>
                <Tool $h={35}><Wrench /></Tool>
                <Tool $h={2} /><HLine />
                <Tool $h={40}><StopSquare /></Tool>
                <HLine />
                <Tool $h={40}><LayoutIcon /></Tool>
                <HLine />
                <Tool $h={41}><PinIcon /></Tool>
              </SideTools>
              <SideTools $w={37} $top={3}>
                <Tool $h={32}><ArrowV up /></Tool>
                <Tool $h={33}><ArrowV /></Tool>
                <Tool $h={35}><WrapIcon /></Tool>
                <Tool $h={28} $on><ScrollEndIcon /></Tool>
                <Tool $h={37}><PrintIcon /></Tool>
                <Tool $h={27}><TrashIcon /></Tool>
              </SideTools>
              <Console>{output.map(l => <div key={l}>{l}</div>)}</Console>
            </RunBody>
          </RunPanel>
        </Work>
      </Main>

      <ToolWindows>
        <ToolWindow $on $w={65} $pad={14} $gap={4}>
          <svg width="15" height="15" viewBox="0 0 15 15"><path d="M0 0l10.500 6.500L0 13z" fill="#afb1b3" /><circle cx="12" cy="13" r="2.600" fill="#00f000" /></svg>
          <Label $size={12.1}>Run</Label>
        </ToolWindow>
        <ToolWindow $w={97} $pad={15} $gap={6}>
          <svg width="13" height="11" viewBox="0 0 13 11" stroke="#afb1b3" strokeWidth="1.700"><path d="M0 1h2.500M4 1h9M0 4h2.500M4 4h9M0 7h2.500M4 7h9M0 10h2.500M4 10h9" /></svg>
          <Label $ls={-0.1}>TODO</Label>
        </ToolWindow>
        <ToolWindow $w={102}>
          <svg width="13" height="13" viewBox="0 0 13 13"><circle cx="6.500" cy="6.500" r="6.500" fill="#afb1b3" /><path d="M6.500 2.500v5M6.500 8.800v1.900" stroke="#3c3f41" strokeWidth="2" /></svg>
          <Label>Problems</Label>
        </ToolWindow>
        <ToolWindow $w={98} $gap={6}>
          <svg width="14" height="13" viewBox="0 0 14 13"><path d="M0 0h14v13H0z" fill="#afb1b3" /><path d="M2.500 3l3.500 3-3.500 3M7.500 10H12" stroke="#3c3f41" strokeWidth="1.500" fill="none" /></svg>
          <Label $size={12.2}>Terminal</Label>
        </ToolWindow>
        <ToolWindow $w={148} $gap={6}>
          <svg width="15" height="15" viewBox="0 0 15 15" fill="#afb1b3"><path d="M7.500 0L15 4 7.500 8 0 4zM1.800 6.200l5.700 3 5.700-3L15 7.300l-7.500 4L0 7.300zM1.800 9.700l5.700 3 5.700-3 1.800 1.100-7.500 4-7.500-4z" /></svg>
          <Label>Python Packages</Label>
        </ToolWindow>
        <ToolWindow $w={130} $gap={6}>
          <PyIcon size={15} a="#9fa1a3" b="#afb1b3" />
          <Label>Python Console</Label>
        </ToolWindow>
        <Spacer />
        <ToolWindow $w={118} $gap={5}>
          <svg width="17" height="16" viewBox="0 0 17 16"><path d="M8.500 0A8 8 0 0 1 17 8v8H8.500a8 8 0 0 1 0-16z" fill="#499c54" /><text x="6" y="12" fontFamily="Open Sans" fontWeight="700" fontSize="10.500" fill="#e8efe9">1</text></svg>
          <Label $size={12.5}>Event Log</Label>
        </ToolWindow>
      </ToolWindows>

      <StatusBar>
        <svg width="16" height="16" viewBox="0 0 16 16" fill="none" stroke="#afb1b3" strokeWidth="1.300"><path d="M3.500.7H15v11.500H3.500zM.7 3v12.300H12.500" /></svg>
        <Label $size={14.33}>{"   Type hints are not installed: They could make code insight better. // Install 'PyQt5-stubs==5.15.2.0' // Ignore // Edit settings (a minute ago)"}</Label>
        <Spacer />
        <StatusCells>
          <StatusCell $w={50}><Label $size={13.9}>46:37</Label></StatusCell>
          <StatusCell $w={48}><Label $size={13.9}>CRLF</Label></StatusCell>
          <StatusCell $w={53}><Label $size={14.2}>UTF-8</Label></StatusCell>
          <StatusCell $w={72}><Label $size={13.9}>4 spaces</Label></StatusCell>
          <StatusCell $w={231}><Label $size={14}>Python 3.10 (micromasterProject)</Label></StatusCell>
        </StatusCells>
        <svg width="15" height="15" viewBox="0 0 15 15"><path d="M4.500 6.500h10V15h-10z" fill="#afb1b3" /><path d="M1 7V4a3 3 0 0 1 6 0v3" fill="none" stroke="#afb1b3" strokeWidth="1.700" /></svg>
      </StatusBar>

      <Taskbar>
        <StartButton>
          <svg width="20" height="20" viewBox="0 0 20 20" fill="#fff"><path d="M0 2.800L8.300 1.600v8H0zM9.300 1.500L20 0v9.600H9.300zM0 10.500h8.300v8L0 17.300zM9.300 10.500H20V20L9.300 18.600z" /></svg>
        </StartButton>
        <SearchBox>
          <svg width="20" height="20" viewBox="0 0 20 20" fill="none" stroke="#1c1c1c" strokeWidth="1.500"><circle cx="12.800" cy="7.200" r="6.400" /><path d="M8.300 11.800L.5 19.500" /></svg>
          Type here to search
        </SearchBox>
        <AppButton $w={60}><AppIcon><svg width="20" height="20"><circle cx="10" cy="10" r="8.600" fill="none" stroke="#fff" strokeWidth="2.400" /></svg></AppIcon></AppButton>
        <AppButton $w={60}><AppIcon><svg width="21" height="20" viewBox="0 0 21 20" fill="none" stroke="#fff" strokeWidth="1.300"><path d="M.7 0v3h13V0M.7 20v-3h13v3M.7 5.500h13v9H.7zM19 0v20" /><path d="M17.300 6h3.400v4h-3.400z" fill="#fff" stroke="none" /></svg></AppIcon></AppButton>
        <AppButton $w={66}><AppIcon><EdgeIcon /></AppIcon></AppButton>
        <AppButton $w={61}><AppIcon><ExplorerIcon /></AppIcon><Underline $split /></AppButton>
        <AppButton><AppIcon><StoreIcon /></AppIcon></AppButton>
        <AppButton><AppIcon><MailIcon /></AppIcon></AppButton>
        <AppButton><AppIcon><ChromeIcon /></AppIcon><Underline /></AppButton>
        <AppButton><AppIcon><EclipseIcon /></AppIcon></AppButton>
        <AppButton><AppIcon><TeamsIcon /></AppIcon><Underline $split /></AppButton>
        <AppButton><AppIcon><SpeakerIcon /></AppIcon><Underline /></AppButton>
        <AppButton><AppIcon><PyCharmLogo size={26} /></AppIcon><Underline /></AppButton>
        <AppButton $active $w={61}><AppIcon><PyAppIcon /></AppIcon><Underline $full /></AppButton>
        <Spacer />
        <Tray>
          <TrayItem $w={22}><WeatherIcon /></TrayItem>
          <TrayItem $w={68}><Label $size={16.2}>17°C</Label></TrayItem>
          <TrayItem $w={28}><svg width="16" height="9" viewBox="0 0 16 9" fill="none" stroke="#fff" strokeWidth="1.300"><path d="M.5 8.500L8 1l7.500 7.500" /></svg></TrayItem>
          <TrayItem $w={30}><svg width="21" height="17" viewBox="0 0 21 17"><path d="M5 14A4.500 4.500 0 0 1 4 5.500a6 6 0 0 1 11-2L16 14z" fill="#a7a5a2" /><path d="M11 1.500a5 5 0 0 1 5 4c3 0 4 2 4 4H11z" fill="#dedddb" /><circle cx="15" cy="12" r="5.500" fill="#f5f5f5" /><path d="M12 12a3 3 0 0 1 5-2.200M18 12a3 3 0 0 1-5 2.200" fill="none" stroke="#1378d0" strokeWidth="1.500" /></svg></TrayItem>
          <TrayItem $w={32}><svg width="15" height="18" viewBox="0 0 15 18" fill="none" stroke="#fff" strokeWidth="1.200"><path d="M.6 5h9v8H.6zM9.600 8l4.500-2v6l-4.500-2M3 2.500C5 .5 8 .5 10 2.500M3 15.500c2 2 5 2 7 0" /></svg></TrayItem>
          <TrayItem $w={28}><svg width="12" height="20" viewBox="0 0 12 20"><rect x="2.500" width="7" height="13" fill="#fff" /><path d="M.6 9v5.500h10.800V9M6 14.500V19M3 19.200h6" fill="none" stroke="#fff" strokeWidth="1.300" /></svg></TrayItem>
          <TrayItem $w={32}><svg width="20" height="14" viewBox="0 0 20 14" fill="none" stroke="#fff" strokeWidth="1.200"><path d="M5 3h12.500v9.500H4.500V8M17.500 6h1.800v4h-1.800" /><path d="M6.500 5H16v6H6.500z" fill="#fff" stroke="none" /><path d="M1 0v2M4 0v2M0 2.500h5v2.500H0zM2.500 5v3h2" /></svg></TrayItem>
          <TrayItem $w={30}><svg width="16" height="17" viewBox="0 0 16 17" fill="none" stroke="#cfcfcf" strokeWidth="1.300"><path d="M1 16C1 8 8 1 15.500 1M5 16C5 10 10 5 15.500 5M8.500 16c0-4 3-7 7-7M12 16c0-2 1.500-3.500 3.500-3.500" /></svg></TrayItem>
          <TrayItem $w={30}><svg width="21" height="16" viewBox="0 0 21 16" fill="none" stroke="#fff" strokeWidth="1.200"><path d="M.6 5.500H4L8 1.500v13l-4-4H.6zM11 5.500c1.200 1.500 1.200 3.500 0 5M14 3.500c2.200 2.500 2.200 6.500 0 9M17 1.500c3.500 3.500 3.500 9.500 0 13" /></svg></TrayItem>
          <TrayItem $w={48}><Label $size={14.1}>ENG</Label></TrayItem>
          <Clock>1:26 PM<br />1/1/2022</Clock>
          <TrayItem $w={46}>
            <svg width="31" height="31" viewBox="0 0 31 31"><path d="M0 2h20v18H8l-4 3v-3H0z" fill="#fff" /><path d="M3.500 7h13M3.500 11h13M3.500 15h8" stroke="#2a2a2a" strokeWidth="1.200" /><circle cx="20" cy="21" r="9.800" fill="#2a2b2b" stroke="#b9b9b9" strokeWidth="1.200" /><text x="20" y="26.300" textAnchor="middle" fontFamily="Open Sans" fontWeight="600" fontSize="14" fill="#fff">7</text></svg>
          </TrayItem>
          <DesktopEdge />
        </Tray>
      </Taskbar>

      <AppWindow>
        <AppTitle><AppWinIcon />python</AppTitle>
        <Form>
          <Field $w={361}>Enter Your Equation Here:<TextBox $h={51}>x^2+2</TextBox></Field>
          <FormRow>
            <Field $w={101} $gap={99}>Min Value for x<TextBox $h={41}>-10</TextBox></Field>
            <Field $w={101} $gap={80}>Max Value for x<TextBox $h={41}>10</TextBox></Field>
            <PlotButton>Plot</PlotButton>
          </FormRow>
        </Form>
      </AppWindow>

      <Figure>
        <FigureTitle>
          <MplLogo /><FigureName>Figure 1</FigureName>
          <Spacer />
          <FigureControls>
            <Dash w={12} h={1.3} color="#000" />
            <svg width="12" height="12" viewBox="0 0 12 12"><rect x=".6" y=".6" width="10.800" height="10.800" fill="none" stroke="#000" strokeWidth="1.200" /></svg>
            <Cross size={13} color="#000" sw={1} />
          </FigureControls>
        </FigureTitle>
        <FigureToolbar>
          <Grip />
          <FigTool $w={47}><HomeIcon /></FigTool>
          <FigTool $w={28}><BackIcon /></FigTool>
          <FigTool $w={43}><BackIcon flip /></FigTool>
          <VLine $h={30} $color="#d0d0d0" />
          <FigTool $w={45}><MoveIcon /></FigTool>
          <FigTool $w={29}><Magnifier size={27} color="#000" sw={2.3} /></FigTool>
          <FigTool $w={45}><SlidersIcon /></FigTool>
          <FigTool $w={30}><ChartIcon /></FigTool>
          <FigTool $w={6} />
          <VLine $h={30} $color="#d0d0d0" />
          <FigTool $w={43}><SaveIcon /></FigTool>
        </FigureToolbar>
        <Plot />
      </Figure>

      <Notice>
        <NoticeIcon><svg width="18" height="18" viewBox="0 0 18 18"><circle cx="9" cy="9" r="9" fill="#3592c4" /><path d="M9 3.500v2.400M9 7.500v6.500" stroke="#3f4447" strokeWidth="2.400" /></svg></NoticeIcon>
        <Label $bold $size={13.92}>Type hints are not installed</Label>
        <NoticeText><Label $size={14.24}>They could make code insight better.</Label></NoticeText>
        <Links><span>Install 'PyQt5-stubs==5.15.2.0'</span><span>Ignore</span><Label $size={14.25}>Edit settings</Label></Links>
      </Notice>
    </Screen>
  );
}
